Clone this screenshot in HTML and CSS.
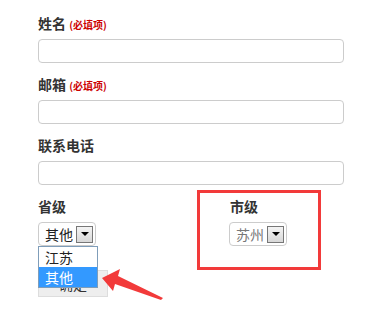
FILE: index.html
```html
<!DOCTYPE html>
<html lang="zh-CN">
<head>
  <meta charset="UTF-8">
  <title>表单</title>
  <link rel="stylesheet" href="styles.css">
</head>
<body>
  <form class="form">
    <div class="field">
      <label>姓名 <span class="req">(必填项)</span></label>
      <input class="text-input" type="text">
    </div>
    <div class="field">
      <label>邮箱 <span class="req">(必填项)</span></label>
      <input class="text-input" type="text">
    </div>
    <div class="field">
      <label>联系电话</label>
      <input class="text-input" type="text">
    </div>

    <div class="select-row">
      <div class="col">
        <label>省级</label>
        <div class="select">
          <span class="select-val">其他</span>
          <span class="select-btn"><i></i></span>
          <ul class="dropdown">
            <li>江苏</li>
            <li class="selected">其他</li>
          </ul>
        </div>
        <button class="btn" type="button">确定</button>
      </div>
      <div class="col col-city">
        <label>市级</label>
        <div class="select disabled">
          <span class="select-val">苏州</span>
          <span class="select-btn"><i></i></span>
        </div>
        <div class="mark-box"></div>
      </div>
    </div>
  </form>

  <svg class="arrow" width="70" height="34" viewBox="0 0 70 34">
    <path d="M1 9 L19 0 L17 7 L62 29 L60 31 L14 15 L12 22 Z" fill="#f23a3a"/>
  </svg>
</body>
</html>
```

FILE: styles.css
```css
* { box-sizing:border-box; margin:0; padding:0; }
html, body { width:100%; height:100%; background:#fff; overflow:hidden; }
body { font-family:'Microsoft YaHei','Noto Sans CJK SC','Liberation Sans',sans-serif; color:#333; font-size:14px; position:relative; }

.form { width:344px; padding:13px 0 0 38px; }
.field { margin-bottom:11px; }
label { display:block; height:20px; font-size:14px; line-height:20px; font-weight:700; color:#333; margin-bottom:6px; overflow:visible; }
.req { font-size:10px; line-height:10px; vertical-align:baseline; color:#c00; font-weight:700; }
.text-input {
  display:block; width:306px; height:24px;
  border:1px solid #ccc; border-radius:4px; background:#fff;
}

.select-row { display:grid; grid-template-columns:191px 1fr; }
.col { position:relative; }
.col-city label { padding-left:1px; }

.select {
  position:relative; display:flex; align-items:center; justify-content:space-between;
  width:58px; height:24px; padding:0 2px 0 6px;
  border:1px solid #ccc; border-radius:4px; background:#fff;
  font-size:14px; line-height:20px; color:#222;
}
.select.disabled .select-val { color:#777; }
.select-btn {
  display:flex; align-items:center; justify-content:center;
  width:17px; height:17px;
  border:1px solid #777;
  background:linear-gradient(#f4f4f4,#d8d8d8);
}
.select-btn i {
  width:0; height:0;
  border-left:4px solid transparent; border-right:4px solid transparent; border-top:4px solid #000;
}

.dropdown {
  position:absolute; left:-1px; top:23px; z-index:2;
  width:60px; list-style:none;
  border:1px solid #7f9db9; background:#fff;
}
.dropdown li { height:20px; line-height:20px; padding-left:6px; color:#222; font-size:14px; }
.dropdown li.selected { background:#3399ff; color:#fff; }

.btn {
  display:block; width:70px; height:27px; margin-top:24px;
  border:1px solid #ddd; background:#eee; color:#333;
  font-family:inherit; font-size:14px;
}

.mark-box {
  position:absolute; left:-32px; top:-6px;
  width:124px; height:80px;
  border:3px solid #f23a3a;
}

.arrow { position:absolute; left:101px; top:269px; }
```
